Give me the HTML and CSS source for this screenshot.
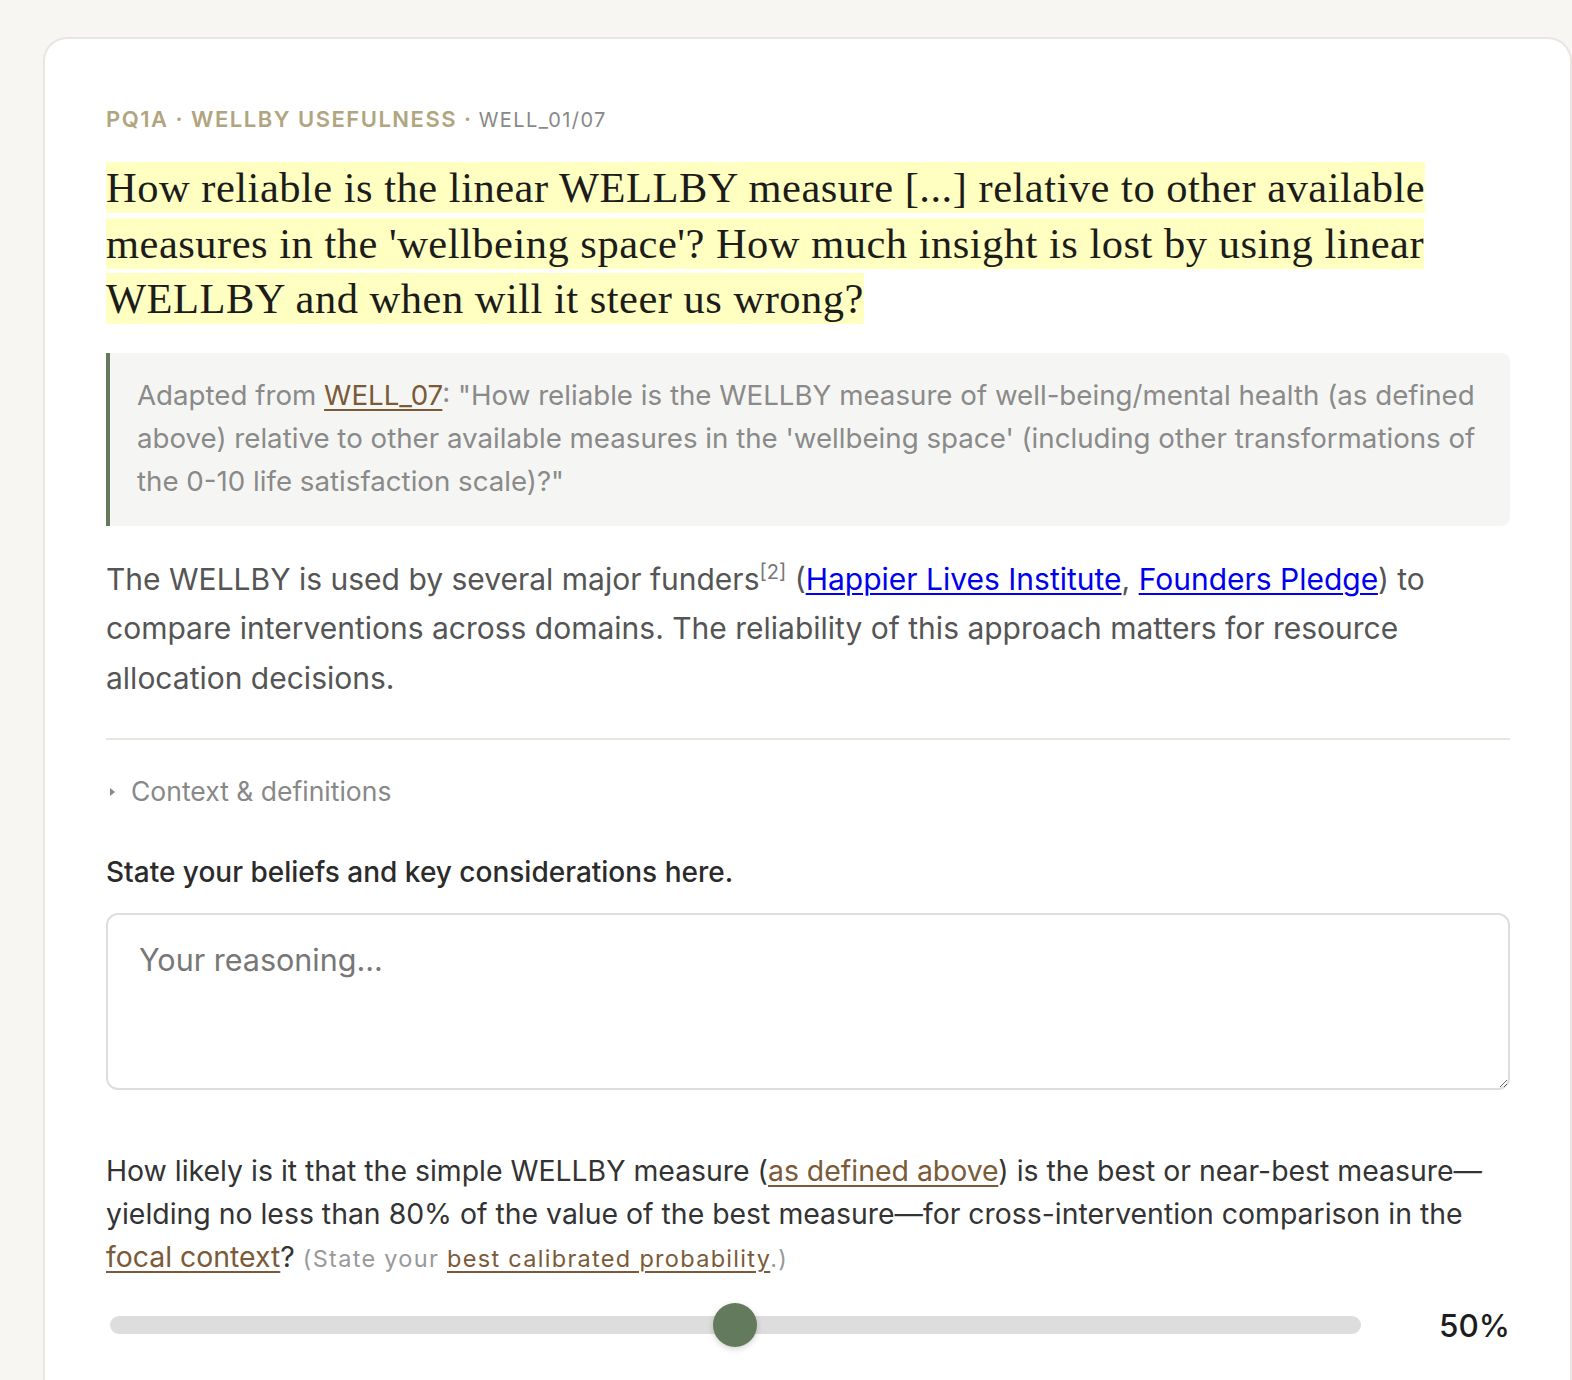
FILE: index.html
```html
<!DOCTYPE html>
<html lang="en">
<head>
<meta charset="utf-8">
<title>PQ1A · WELLBY usefulness</title>
<link rel="stylesheet" href="styles.css">
</head>
<body>
<main class="page">
  <section class="card">
    <div class="meta"><span class="meta-tag">PQ1A · WELLBY USEFULNESS ·</span> <span class="meta-id">WELL_01/07</span></div>
    <h1 class="title"><span class="hl">How reliable is the linear WELLBY measure [...] relative to other available measures in the 'wellbeing space'? How much insight is lost by using linear WELLBY and when will it steer us wrong?</span></h1>
    <blockquote class="quote">Adapted from <a class="link" href="#">WELL_07</a>: "How reliable is the WELLBY measure of well-being/mental health (as defined above) relative to other available measures in the 'wellbeing space' (including other transformations of the 0-10 life satisfaction scale)?"</blockquote>
    <p class="intro">The WELLBY is used by several major funders<sup class="ref">[2]</sup> (<a class="ext" href="#">Happier Lives Institute</a>, <a class="ext" href="#">Founders Pledge</a>) to compare interventions across domains. The reliability of this approach matters for resource allocation decisions.</p>
    <hr class="divider">
    <details class="ctx">
      <summary>Context &amp; definitions</summary>
    </details>
    <label class="prompt" for="reason">State your beliefs and key considerations here.</label>
    <textarea id="reason" class="reason" placeholder="Your reasoning..."></textarea>
    <p class="question">How likely is it that the simple WELLBY measure (<a class="link" href="#">as defined above</a>) is the best or near-best measure—yielding no less than 80% of the value of the best measure—for cross-intervention comparison in the <a class="link" href="#">focal context</a>? <span class="hint">(State your <a class="link" href="#">best calibrated probability</a>.)</span></p>
    <div class="slider-row">
      <input class="slider" type="range" min="0" max="100" value="50">
      <span class="pct">50%</span>
    </div>
  </section>
</main>
</body>
</html>
```
FILE: styles.css
```css
html, body {
  margin: 0;
  padding: 0;
  background: #f7f6f2;
}
body {
  font-family: "Inter", "Noto Sans", sans-serif;
  color: #333;
}
.page {
  padding: 37px 0 0 43px;
  height: 1380px;
  box-sizing: border-box;
  overflow: hidden;
}
.card {
  background: #fff;
  border: 2px solid #e9e6df;
  border-bottom: none;
  border-radius: 24px 24px 0 0;
  padding: 66px 60px 40px 61px;
  min-height: 1400px;
  box-sizing: border-box;
}
.meta {
  font-size: 22px;
  line-height: 28px;
}
.meta-tag {
  color: #b1a57f;
  font-weight: 600;
  letter-spacing: 1.5px;
}
.meta-id {
  color: #888;
  font-size: 20px;
  letter-spacing: 1.4px;
}
.title {
  margin: 26px 0 26px;
  font-family: "Liberation Serif", "DejaVu Serif", serif;
  font-weight: 400;
  font-size: 42.5px;
  letter-spacing: 0.5px;
  line-height: 55.5px;
  color: #1c1c1a;
}
.hl {
  background: #ffffc2;
  padding: 2px 0;
}
.quote {
  margin: 0;
  background: #f5f6f3;
  border-left: 4px solid #637a5c;
  border-radius: 0 8px 8px 0;
  padding: 21.5px 24px 22.5px 27px;
  font-size: 27.7px;
  line-height: 43px;
  color: #8a8a8a;
}
.link {
  color: #7b5a38;
  text-decoration: underline;
  text-decoration-thickness: 2px;
  text-underline-offset: 4px;
}
.intro {
  margin: 29px 0 0;
  font-size: 30px;
  line-height: 49.5px;
  color: #555;
}
.ref {
  font-size: 20px;
  color: #777;
  vertical-align: super;
  line-height: 0;
}
.ext {
  color: #0000ee;
  text-decoration: underline;
  text-decoration-thickness: 2px;
  text-underline-offset: 3px;
}
.divider {
  border: none;
  border-top: 2px solid #e8e5de;
  margin: 35px 0 0;
}
.ctx {
  margin-top: 32px;
  font-size: 26.5px;
  line-height: 38px;
  color: #888;
}
.ctx summary {
  cursor: pointer;
  list-style: none;
}
.ctx summary::-webkit-details-marker {
  display: none;
}
.ctx summary::before {
  content: "";
  display: inline-block;
  vertical-align: middle;
  width: 0;
  height: 0;
  border-left: 5px solid #888;
  border-top: 4px solid transparent;
  border-bottom: 4px solid transparent;
  margin: -4px 16px 0 4px;
}
.prompt {
  display: block;
  margin-top: 44px;
  font-size: 28px;
  line-height: 36px;
  font-weight: 500;
  color: #2b2b2b;
}
.reason {
  display: block;
  margin-top: 23px;
  width: 100%;
  height: 177px;
  box-sizing: border-box;
  border: 2px solid #dedede;
  border-radius: 12px;
  padding: 26px 31px;
  font-family: "Inter", "Noto Sans", sans-serif;
  font-size: 30.5px;
  line-height: 37px;
  color: #333;
  resize: vertical;
}
.reason::placeholder {
  color: #777;
}
.question {
  margin: 59px 0 0;
  font-size: 28.4px;
  line-height: 43px;
  color: #333;
}
.hint {
  font-size: 23.5px;
  letter-spacing: 1.3px;
  color: #999;
}
.slider-row {
  display: flex;
  align-items: center;
  gap: 78px;
  height: 44px;
  margin-top: 23px;
}
.slider {
  flex: 1;
  -webkit-appearance: none;
  appearance: none;
  height: 18px;
  margin: 0 0 0 4px;
  background: #dddddd;
  border-radius: 9px;
  outline: none;
}
.slider::-webkit-slider-thumb {
  -webkit-appearance: none;
  appearance: none;
  width: 44px;
  height: 44px;
  border-radius: 50%;
  background: #637a5c;
  box-shadow: 0 2px 6px rgba(0,0,0,0.18);
  cursor: pointer;
}
.pct {
  font-size: 31.5px;
  font-weight: 500;
  color: #1d1d1d;
}
```
